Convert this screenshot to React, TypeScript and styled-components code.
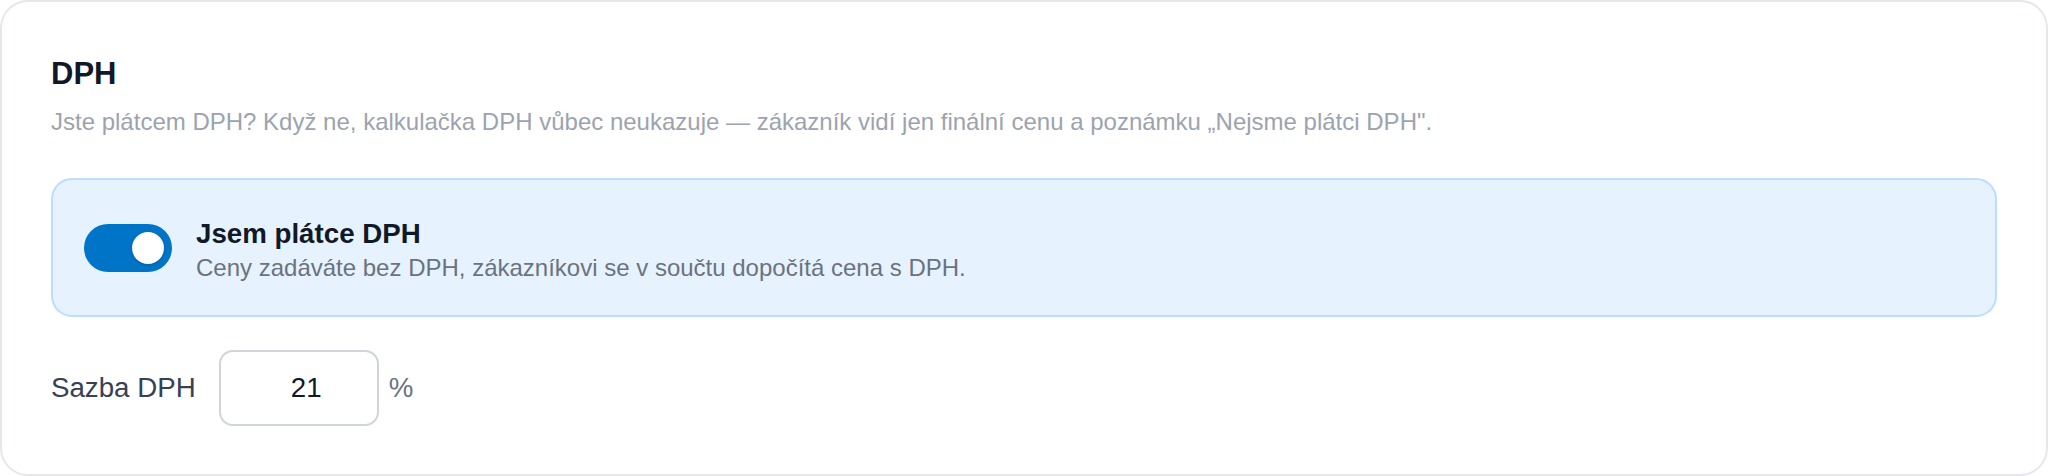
import React, { useState } from "react";
import styled, { createGlobalStyle } from "styled-components";

const GlobalStyle = createGlobalStyle`
  html, body {
    margin: 0;
    padding: 0;
    background: #ffffff;
  }
  body {
    font-family: "Liberation Sans", Arial, sans-serif;
  }
  * {
    box-sizing: border-box;
  }
`;

const Card = styled.section`
  width: 2048px;
  height: 476px;
  border: 2px solid #e5e7eb;
  border-radius: 28px;
  background: #ffffff;
  padding: 54px 49px 48px;
  display: flex;
  flex-direction: column;
`;

const Title = styled.h2`
  margin: 0;
  font-size: 31px;
  line-height: 36px;
  font-weight: 700;
  color: #111827;
`;

const Subtitle = styled.p`
  margin: 13px 0 0;
  font-size: 24px;
  line-height: 34px;
  color: #9ca3af;
`;

const Callout = styled.div`
  margin-top: 39px;
  display: flex;
  align-items: center;
  gap: 24px;
  padding: 30.5px 31px;
  background: #e6f3fe;
  border: 2px solid #bfdbfe;
  border-radius: 21px;
`;

const Switch = styled.button<{ $on: boolean }>`
  position: relative;
  flex: 0 0 auto;
  width: 88px;
  height: 48px;
  padding: 0;
  border: none;
  border-radius: 24px;
  background: ${(p) => (p.$on ? "#0074c7" : "#cbd5e1")};
  cursor: pointer;
`;

const Knob = styled.span<{ $on: boolean }>`
  position: absolute;
  top: 8px;
  left: ${(p) => (p.$on ? "48px" : "8px")};
  width: 32px;
  height: 32px;
  border-radius: 50%;
  background: #ffffff;
  box-shadow: 0 1px 3px rgba(0, 0, 0, 0.2);
`;

const CalloutText = styled.div`
  display: flex;
  flex-direction: column;
  padding-top: 5px;
`;

const CalloutTitle = styled.div`
  font-size: 27.7px;
  line-height: 35px;
  font-weight: 700;
  color: #111827;
`;

const CalloutDesc = styled.div`
  font-size: 24px;
  line-height: 34px;
  color: #6b7280;
`;

const RateRow = styled.div`
  margin-top: 33px;
  display: flex;
  align-items: center;
`;

const RateLabel = styled.label`
  font-size: 27.7px;
  color: #374151;
  margin-right: 23px;
`;

const RateInput = styled.input`
  width: 160px;
  height: 76px;
  padding: 0 0 0 15px;
  border: 2px solid #d1d5db;
  border-radius: 14px;
  background: #ffffff;
  font-family: "Liberation Sans", Arial, sans-serif;
  font-size: 27.7px;
  color: #111827;
  text-align: center;
  outline: none;
`;

const Unit = styled.span`
  margin-left: 10px;
  font-size: 27.7px;
  color: #6b7280;
`;

export default function App() {
  const [payer, setPayer] = useState(true);
  const [rate, setRate] = useState("21");

  return (
    <>
      <GlobalStyle />
      <Card>
        <Title>DPH</Title>
        <Subtitle>
          Jste plátcem DPH? Když ne, kalkulačka DPH vůbec neukazuje — zákazník
          vidí jen finální cenu a poznámku „Nejsme plátci DPH".
        </Subtitle>
        <Callout>
          <Switch
            type="button"
            role="switch"
            aria-checked={payer}
            $on={payer}
            onClick={() => setPayer(!payer)}
          >
            <Knob $on={payer} />
          </Switch>
          <CalloutText>
            <CalloutTitle>Jsem plátce DPH</CalloutTitle>
            <CalloutDesc>
              Ceny zadáváte bez DPH, zákazníkovi se v součtu dopočítá cena s
              DPH.
            </CalloutDesc>
          </CalloutText>
        </Callout>
        <RateRow>
          <RateLabel htmlFor="vat-rate">Sazba DPH</RateLabel>
          <RateInput
            id="vat-rate"
            value={rate}
            onChange={(e) => setRate(e.target.value)}
          />
          <Unit>%</Unit>
        </RateRow>
      </Card>
    </>
  );
}
